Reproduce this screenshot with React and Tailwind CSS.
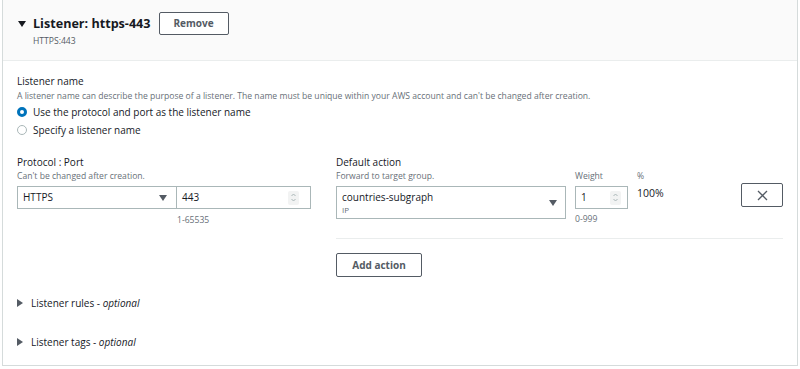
import { useState } from 'react';

const font = { fontFamily: '"Open Sans", "Noto Sans", sans-serif' };

function Caret({ className = '' }) {
  return (
    <svg className={className} width="8" height="6" viewBox="0 0 8 6">
      <path d="M0 0 L8 0 L4 6 Z" fill="currentColor" />
    </svg>
  );
}

function RightCaret() {
  return (
    <svg width="6" height="8" viewBox="0 0 6 8" className="text-[#545b64]">
      <path d="M0 0 L6 4 L0 8 Z" fill="currentColor" />
    </svg>
  );
}

function Spinner() {
  return (
    <span className="flex h-[14px] w-[11px] flex-col items-center justify-center rounded-[2px] bg-[#f2f3f3]">
      <svg width="7" height="11" viewBox="0 0 7 11" fill="none" stroke="#aab7b8" strokeWidth="1">
        <path d="M1.5 4 L3.5 2 L5.5 4" />
        <path d="M1.5 7 L3.5 9 L5.5 7" />
      </svg>
    </span>
  );
}

function Radio({ checked, label, onClick }) {
  return (
    <button onClick={onClick} className="flex h-[14px] items-center gap-[6px] text-[10px] leading-[14px] text-[#16191f]">
      {checked ? (
        <span className="h-[10px] w-[10px] rounded-full border-[3px] border-[#0073bb] bg-white" />
      ) : (
        <span className="h-[10px] w-[10px] rounded-full border border-[#aab7b8] bg-white" />
      )}
      {label}
    </button>
  );
}

export default function App() {
  const [useDefault, setUseDefault] = useState(true);

  return (
    <div className="h-[369px] w-[800px] bg-white px-[2px]" style={font}>
      <div className="h-[366px] border-x border-b border-[#d5dbdb]">
        <header className="h-[61px] border-b border-[#eaeded] bg-[#fafafa] px-[15px] pt-[12px]">
          <div className="flex h-[23px] items-center">
            <Caret className="mr-[7px] text-[#16191f]" />
            <h1 className="text-[12.6px] font-bold leading-[18px] text-[#16191f]">Listener: https-443</h1>
            <button className="ml-[8px] h-[23px] w-[70px] rounded-[2px] border border-[#545b64] bg-white text-[10px] font-bold text-[#545b64]">
              Remove
            </button>
          </div>
          <p className="ml-[15px] text-[8.6px] leading-[12px] text-[#545b64]">HTTPS:443</p>
        </header>

        <main className="px-[14px] pt-[13px]">
          <h2 className="text-[10px] leading-[14px] text-[#16191f]">Listener name</h2>
          <p className="mt-[2px] text-[8.6px] leading-[12px] text-[#687078]">
            A listener name can describe the purpose of a listener. The name must be unique within your AWS account and can't be changed after creation.
          </p>
          <div className="mt-[3px] flex flex-col gap-[4px]">
            <Radio checked={useDefault} label="Use the protocol and port as the listener name" onClick={() => setUseDefault(true)} />
            <Radio checked={!useDefault} label="Specify a listener name" onClick={() => setUseDefault(false)} />
          </div>

          <div className="mt-[18px] flex items-start">
            <div className="w-[320px]">
              <h3 className="text-[10px] leading-[14px] text-[#16191f]">Protocol : Port</h3>
              <p className="mt-[1px] text-[8.6px] leading-[12px] text-[#687078]">Can't be changed after creation.</p>
              <div className="mt-[4px] flex">
                <div className="flex h-[23px] w-[160px] items-center justify-between border border-[#aab7b8] pl-[5px] pr-[9px] text-[10px] text-[#16191f]">
                  HTTPS
                  <Caret className="text-[#545b64]" />
                </div>
                <div className="flex h-[23px] w-[134px] items-center justify-between border border-l-0 border-[#aab7b8] pl-[5px] pr-[11px] text-[10px] text-[#16191f]">
                  443
                  <Spinner />
                </div>
              </div>
              <p className="ml-[160px] mt-[5px] text-[8.6px] leading-[12px] text-[#687078]">1-65535</p>
            </div>

            <div className="flex-1">
              <h3 className="text-[10px] leading-[14px] text-[#16191f]">Default action</h3>
              <div className="flex items-start">
                <div className="w-[239px]">
                  <p className="mt-[1px] text-[8.6px] leading-[12px] text-[#687078]">Forward to target group.</p>
                  <div className="mt-[4px] flex h-[33px] w-[230px] items-center justify-between border border-[#aab7b8] pl-[5px] pr-[8px]">
                    <div>
                      <p className="text-[10px] leading-[13px] text-[#16191f]">countries-subgraph</p>
                      <p className="text-[8px] leading-[11px] text-[#687078]">IP</p>
                    </div>
                    <Caret className="text-[#545b64]" />
                  </div>
                </div>
                <div className="w-[62px]">
                  <p className="mt-[1px] text-[8.6px] leading-[12px] text-[#687078]">Weight</p>
                  <div className="mt-[4px] flex h-[23px] w-[53px] items-center justify-between border border-[#aab7b8] pl-[5px] pr-[6px] text-[10px] text-[#16191f]">
                    1
                    <Spinner />
                  </div>
                  <p className="mt-[4px] text-[8.6px] leading-[12px] text-[#687078]">0-999</p>
                </div>
                <div className="w-[104px]">
                  <p className="mt-[1px] text-[8.6px] leading-[12px] text-[#687078]">%</p>
                  <p className="mt-[4px] text-[10.5px] leading-[14px] text-[#16191f]">100%</p>
                </div>
                <button className="mt-[14px] flex h-[24px] w-[42px] items-center justify-center rounded-[2px] border border-[#545b64] bg-white">
                  <svg width="11" height="11" viewBox="0 0 11 11" stroke="#545b64" strokeWidth="1.3">
                    <path d="M1 1 L10 10 M10 1 L1 10" />
                  </svg>
                </button>
              </div>
              <div className="mt-[13px] border-t border-[#eaeded]" />
              <button className="mt-[14px] h-[24px] w-[86px] rounded-[2px] border border-[#545b64] bg-white text-[10px] font-bold text-[#545b64]">
                Add action
              </button>
            </div>
          </div>

          <div className="mt-[19px] flex h-[14px] items-center gap-[8px] text-[10px] leading-[14px] text-[#16191f]">
            <RightCaret />
            <span>
              Listener rules - <i>optional</i>
            </span>
          </div>
          <div className="mt-[25px] flex h-[14px] items-center gap-[8px] text-[10px] leading-[14px] text-[#16191f]">
            <RightCaret />
            <span>
              Listener tags - <i>optional</i>
            </span>
          </div>
        </main>
      </div>
    </div>
  );
}
